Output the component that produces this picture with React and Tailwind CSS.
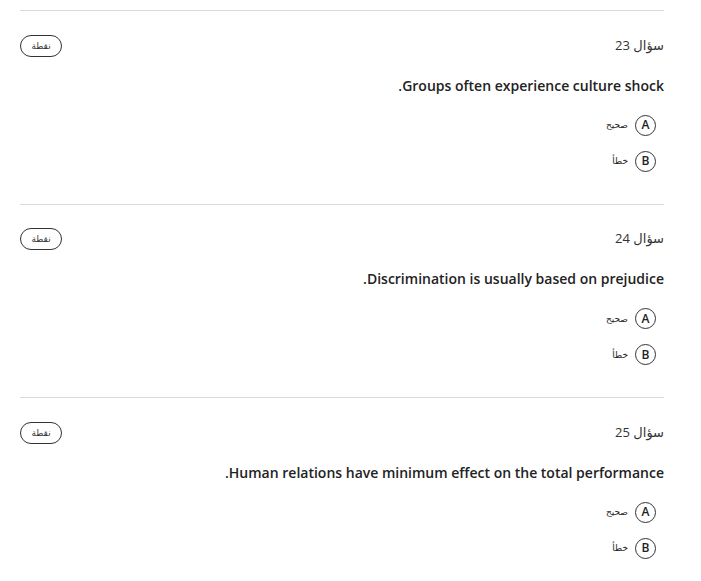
const questions = [
  { num: 23, text: '.Groups often experience culture shock' },
  { num: 24, text: '.Discrimination is usually based on prejudice' },
  { num: 25, text: '.Human relations have minimum effect on the total performance' },
];

const options = [
  { key: 'A', label: 'صحيح' },
  { key: 'B', label: 'خطأ' },
];

const Question = ({ q }) => (
  <div className="border-t border-[#d9d9d9] pt-[23.5px] pb-[32px]">
    <div className="flex items-center justify-between h-[22px]">
      <span className="text-[13px] text-[#333]">سؤال {q.num}</span>
      <span className="h-[22px] w-[42px] rounded-full border border-[#333] flex items-center justify-center text-[9px] text-[#333]">
        نقطة
      </span>
    </div>
    <p className="mt-[19px] text-[14px] leading-[20px] font-semibold text-[#222]">
      <span dir="ltr">{q.text}</span>
    </p>
    <div className="mt-[19px] flex flex-col gap-[15px] pr-[8px]">
      {options.map((o) => (
        <div key={o.key} className="flex items-center gap-[7px]">
          <span className="w-[21px] h-[21px] rounded-full border border-[#333] flex items-center justify-center text-[12px] font-semibold text-[#222]">
            {o.key}
          </span>
          <span className="text-[9px] text-[#222]">{o.label}</span>
        </div>
      ))}
    </div>
  </div>
);

export default function App() {
  return (
    <div
      dir="rtl"
      className="bg-white w-[701px] h-[581px] overflow-hidden pt-[10px] pl-[20px] pr-[37px]"
      style={{ fontFamily: '"Open Sans", "DejaVu Sans", sans-serif' }}
    >
      {questions.map((q) => (
        <Question key={q.num} q={q} />
      ))}
    </div>
  );
}
